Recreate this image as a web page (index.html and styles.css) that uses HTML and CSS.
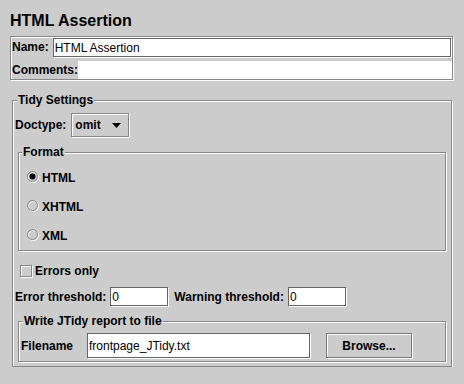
FILE: index.html
```html
<!DOCTYPE html>
<html lang="en">
<head>
  <meta charset="UTF-8">
  <title>HTML Assertion</title>
  <link rel="stylesheet" href="styles.css">
</head>
<body>
  <div class="page">
    <h1 class="title">HTML Assertion</h1>

    <div class="name-panel">
      <div class="name-row">
        <label for="name">Name:</label>
        <input class="field name-field" id="name" type="text" value="HTML Assertion">
      </div>
      <div class="name-row comments-row">
        <label for="comments">Comments:</label>
        <input class="field comments-field" id="comments" type="text" value="">
      </div>
    </div>

    <fieldset class="group tidy">
      <legend>Tidy Settings</legend>

      <div class="doctype-row">
        <span>Doctype:</span>
        <div class="combo">
          <span>omit</span>
          <svg width="9" height="5" viewBox="0 0 9 5"><polygon points="0,0 9,0 4.5,5" fill="#000"/></svg>
        </div>
      </div>

      <fieldset class="group format">
        <legend>Format</legend>
        <div class="radio">
          <svg width="13" height="13" viewBox="0 0 13 13">
            <circle cx="6.5" cy="6.5" r="5" fill="none" stroke="#fff"/>
            <circle cx="5.5" cy="5.5" r="5" fill="none" stroke="#888"/>
            <circle cx="5.5" cy="5.5" r="3" fill="#000"/>
          </svg>
          <span>HTML</span>
        </div>
        <div class="radio">
          <svg width="13" height="13" viewBox="0 0 13 13">
            <circle cx="6.5" cy="6.5" r="5" fill="none" stroke="#fff"/>
            <circle cx="5.5" cy="5.5" r="5" fill="none" stroke="#888"/>
          </svg>
          <span>XHTML</span>
        </div>
        <div class="radio">
          <svg width="13" height="13" viewBox="0 0 13 13">
            <circle cx="6.5" cy="6.5" r="5" fill="none" stroke="#fff"/>
            <circle cx="5.5" cy="5.5" r="5" fill="none" stroke="#888"/>
          </svg>
          <span>XML</span>
        </div>
      </fieldset>

      <div class="check">
        <span class="box"></span>
        <span>Errors only</span>
      </div>

      <div class="threshold-row">
        <label for="err">Error threshold:</label>
        <input class="field small-field" id="err" type="text" value="0">
        <label class="warn-label" for="warn">Warning threshold:</label>
        <input class="field small-field" id="warn" type="text" value="0">
      </div>

      <fieldset class="group report">
        <legend>Write JTidy report to file</legend>
        <div class="report-row">
          <label class="file-label" for="file">Filename</label>
          <input class="field file-field" id="file" type="text" value="frontpage_JTidy.txt">
          <button class="button">Browse...</button>
        </div>
      </fieldset>
    </fieldset>
  </div>
</body>
</html>
```

FILE: styles.css
```css
* { box-sizing: border-box; }
body { margin: 0; background: #cccccc; color: #000; font: bold 12px "Liberation Sans", Arial, sans-serif; }
.page { padding: 12px 0 0 10px; width: 453px; }
.title { margin: 0 0 6px; font-size: 16px; line-height: 18px; }

/* etched look shared by panels, boxes and buttons */
.name-panel, .group, .combo, .box, .button { border: 1px solid #888; box-shadow: 1px 1px 0 #fff, inset 1px 1px 0 #fff; }

.name-panel { width: 443px; height: 44px; padding: 1px 0 0 1px; display: flex; flex-direction: column; gap: 4px; }
.name-row { display: flex; align-items: center; height: 19px; }
.name-row label { margin-right: 4px; line-height: 15px; }
.comments-row { height: 18px; }
.comments-row label { margin-right: 0; }

.field { margin: 0; padding: 0 1px; height: 19px; background: #fff; color: #000; border: 1px solid #666; box-shadow: 1px 1px 0 #fff; outline: none; font: 12px "Liberation Sans", Arial, sans-serif; }
.name-field { flex: 1; min-width: 0; margin-right: 1px; }
.comments-field { flex: 1; min-width: 0; height: 18px; border: none; box-shadow: none; }

.group { margin: 0; padding: 0; min-width: 0; }
.group legend { padding: 0 1px; line-height: 15px; background: #cccccc; }

.tidy { width: 440px; margin: 13px 0 0 2px; padding: 5px 2px 4px; }
.tidy > legend { margin-left: 2px; }

.doctype-row { display: flex; align-items: center; height: 24px; line-height: 15px; }
.combo { display: flex; align-items: center; justify-content: space-between; width: 58px; height: 24px; margin-left: 5px; padding: 0 7px 0 3px; }

.format { margin: 8px 3px 0; height: 106px; padding-top: 3px; }
.format > legend { margin-left: 3px; }
.radio { display: flex; align-items: center; height: 29px; padding-left: 8px; }
.radio svg { margin-right: 2px; }

.check { display: flex; align-items: center; height: 16px; margin: 12px 0 0 5px; }
.box { width: 12px; height: 12px; margin-right: 3px; }

.threshold-row { display: flex; align-items: center; height: 19px; margin-top: 8px; }
.small-field { width: 58px; margin-left: 4px; }
.warn-label { margin-left: 6px; }

.report { margin: 8px 3px 0; padding: 4px 0 3px; }
.report > legend { margin-left: 4px; }
.report-row { display: flex; align-items: center; height: 25px; padding-left: 2px; }
.file-label { width: 66px; }
.file-field { width: 223px; height: 25px; }
.button { width: 86px; height: 25px; margin-left: 16px; padding: 0; background: #cccccc; color: #000; border-color: #7a7a7a; font: bold 12px "Liberation Sans", Arial, sans-serif; }
```
